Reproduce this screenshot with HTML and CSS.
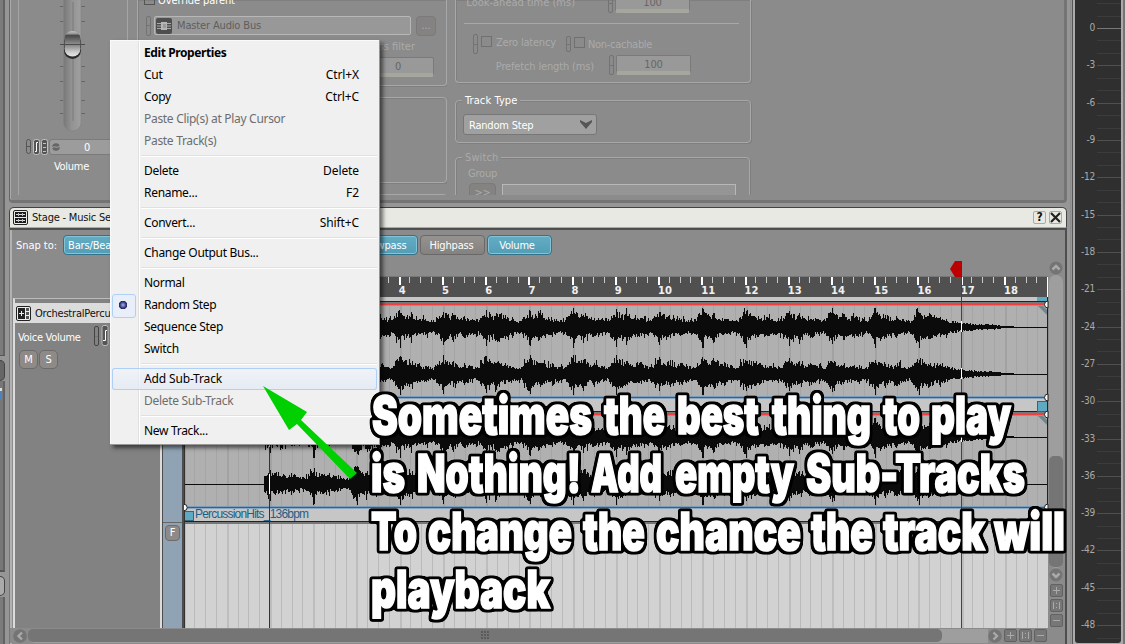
FILE: index.html
```html
<!DOCTYPE html>
<html lang="en">
<head>
<meta charset="utf-8">
<title>Stage - Music Segment</title>
<link rel="stylesheet" href="styles.css">
</head>
<body>
<div class="app">
  <aside class="edge">
    <div class="edge-panel edge-a"></div>
    <div class="edge-panel edge-b"></div>
    <div class="edge-panel edge-c"><i></i></div>
    <div class="edge-panel edge-d"></div>
    <div class="edge-panel edge-e"></div>
  </aside>

  <main class="main">
    <section class="props">
      <div class="fader-col">
        <svg class="fader" width="110" height="200" viewBox="18 0 110 200">
          <defs>
            <linearGradient id="track" x1="0" x2="1"><stop offset="0" stop-color="#777"/><stop offset=".45" stop-color="#929292"/><stop offset="1" stop-color="#a0a0a0"/></linearGradient>
            <linearGradient id="cap" x1="0" x2="0" y1="0" y2="1"><stop offset="0" stop-color="#c6c6c6"/><stop offset=".1" stop-color="#999"/><stop offset=".18" stop-color="#484848"/><stop offset=".5" stop-color="#8b8b8b"/><stop offset=".54" stop-color="#848484"/><stop offset=".85" stop-color="#d2d2d2"/><stop offset="1" stop-color="#e6e6e6"/></linearGradient>
          </defs>
          <path d="M18.5 0V195" stroke="#a5a5a5"/><path d="M127.500 0V200" stroke="#a5a5a5"/>
          <path d="M60 6.500H64M81 6.500H85M60 21.500H64M81 21.500H85M60 66.500H64M81 66.500H85M60 81.500H64M81 81.500H85M60 100.500H64M81 100.500H85M60 113.500H64M81 113.500H85" stroke="#666"/>
          <rect x="63.500" y="-10" width="17.500" height="141" rx="8.500" fill="url(#track)" stroke="#848484" stroke-width=".7"/>
          <path d="M73 2V121" stroke="#7b7b7b"/>
          <rect x="64" y="34" width="17" height="25" rx="8.500" fill="#2c2c2c"/>
          <rect x="64.500" y="31" width="16" height="25.500" rx="8" fill="url(#cap)"/>
          <path d="M64.500 40V48M80.500 40V48" stroke="#555"/>
          <path d="M60 44.500H85" stroke="#4c4c4c"/>
          <g fill="none" stroke="#555"><rect x="26.500" y="139.500" width="4" height="14" rx="2"/><path d="M27 146.500H30"/></g>
          <g fill="#555" stroke="#c2c2c2"><rect x="33.500" y="139.500" width="6" height="15" rx="2"/><path d="M38 142.500H36.500V151.500H35" stroke="#fff"/><rect x="41.500" y="139.500" width="6" height="15" rx="2"/><path d="M43 143.500H46M43 147.500H46M43 151.500H46"/></g>
          <rect x="49.500" y="139.500" width="100" height="15" rx="2.500" fill="#9c9c9c" stroke="#7b7b7b"/>
          <circle cx="56" cy="147" r="3.800" fill="#666"/><path d="M52 148C54 145 56 149 60 146" stroke="#aaa" fill="none"/>
        </svg>
        <span class="fader-value">0</span>
        <span class="fader-name">Volume</span>
      </div>

      <div class="bus-col">
        <div class="group bus-group">
          <div class="override"><i class="check"></i><span>Override parent</span></div>
          <div class="bus-row">
            <i class="link"></i>
            <div class="bus-input">
              <svg width="16" height="16" viewBox="0 0 16 16"><rect width="16" height="16" rx="2" fill="#4e4e4e"/><path d="M1 5.500H15M1 8H15M1 10.500H15" stroke="#a9a9a9"/><rect x="5" y="4" width="6" height="8" fill="#b5b5b5"/><rect x="7" y="6" width="3" height="4" fill="#999"/></svg>
              <span>Master Audio Bus</span>
            </div>
            <button class="dots">...</button>
          </div>
          <div class="filter-name">Low-pass filter</div>
          <div class="number filter-number">0</div>
        </div>
        <div class="group empty-group"></div>
        <div class="group cut-group"></div>
      </div>

      <div class="stream-col">
        <div class="group stream-group">
          <div class="field-row look"><span>Look-ahead time (ms)</span><i class="link"></i><div class="number">100</div></div>
          <div class="divider"></div>
          <div class="check-row"><i class="link"></i><i class="check"></i><span class="zero">Zero latency</span><i class="link low"></i><i class="check low"></i><span class="low">Non-cachable</span></div>
          <div class="field-row prefetch"><span>Prefetch length (ms)</span><i class="link"></i><div class="number">100</div></div>
        </div>
        <div class="group type-group">
          <span class="legend bright">Track Type</span>
          <div class="select"><span>Random Step</span><svg width="12" height="9" viewBox="0 0 12 9"><path d="M0 0L6 3L12 0V2L6 9L0 2Z" fill="#555"/></svg></div>
        </div>
        <div class="group switch-group">
          <span class="legend">Switch</span>
          <div class="group-name">Group</div>
          <div class="switch-row"><button class="arrows">&gt;&gt;</button><div class="switch-input"></div></div>
        </div>
      </div>
    </section>

    <section class="stage">
      <header class="stage-title">
        <svg width="15" height="15" viewBox="0 0 15 15"><rect x=".5" y=".5" width="14" height="14" rx="1.500" fill="#eee" stroke="#222"/><path d="M2 2H13V7H2ZM2 8H13V13H2Z" fill="#1c1c1c"/><path d="M3 4.500H12M3 10.500H12" stroke="#ddd"/><path d="M5.500 3V6M9.500 3V6M5.500 9V12M9.500 9V12" stroke="#bbb"/></svg>
        <span>Stage - Music Segment</span>
        <i class="title-btn help">?</i>
        <i class="title-btn"><svg width="11" height="11" viewBox="0 0 11 11"><path d="M1 1L10 10M10 1L1 10" stroke="#222" stroke-width="2.200"/></svg></i>
      </header>
      <div class="stage-frame">
        <div class="toolbar">
          <span class="snap">Snap to:</span>
          <button class="toggle on bars">Bars/Beats</button>
          <button class="toggle on lowpass">Lowpass</button>
          <button class="toggle">Highpass</button>
          <button class="toggle on vol">Volume</button>
        </div>
        <div class="stage-body">
          <div class="track-col">
            <div class="track-panel">
              <div class="track-title">
                <svg width="15" height="15" viewBox="0 0 15 15"><rect x=".5" y=".5" width="14" height="14" rx="1.500" fill="#eee" stroke="#222"/><rect x="2" y="2" width="7" height="11" fill="#222"/><path d="M3 7.500H8M5.500 5V10" stroke="#eee"/><path d="M10 2H13V5H10ZM10 6H13V9H10ZM10 10H13V13H10Z" fill="#555"/></svg>
                <span>OrchestralPercussion</span>
              </div>
              <div class="voice"><span>Voice Volume</span><i class="link dark"></i><svg width="8" height="21" viewBox="0 0 8 21"><rect x="1" y=".5" width="6" height="20" rx="2" fill="#555" stroke="#bbb"/><path d="M6 5.500H4.500V15.500H2" stroke="#fff" fill="none"/></svg></div>
              <div class="ms"><button>M</button><button>S</button></div>
            </div>
          </div>
          <div class="strip"><div class="strip-cell"><button>F</button></div></div>
          <svg id="timeline" class="timeline" width="865" height="368" viewBox="184 260 865 368"></svg>
          <div class="vscroll">
            <svg width="14" height="14" viewBox="0 0 14 14"><circle cx="7" cy="7" r="6.500" fill="#747474"/><path d="M3.500 8.500L7 5L10.500 8.500" stroke="#aaa" stroke-width="2.500" fill="none"/></svg>
            <div class="vtrack"><div class="vthumb"></div></div>
            <svg width="14" height="14" viewBox="0 0 14 14"><circle cx="7" cy="7" r="6.500" fill="#747474"/><path d="M3.500 5.500L7 9L10.500 5.500" stroke="#aaa" stroke-width="2.500" fill="none"/></svg>
            <i class="zoom plus"></i><i class="zoom fit"></i><i class="zoom minus"></i>
          </div>
        </div>
        <div class="hscroll">
          <svg width="15" height="14" viewBox="0 0 15 14"><circle cx="7" cy="7" r="6.800" fill="#747474"/><path d="M9 3.500L5.500 7L9 10.500" stroke="#aaa" stroke-width="2.300" fill="none"/></svg>
          <div class="htrack"><div class="hthumb"><i></i></div></div>
          <svg width="14" height="14" viewBox="0 0 14 14"><circle cx="7" cy="7" r="6.800" fill="#747474"/><path d="M5.500 3.500L9 7L5.500 10.500" stroke="#aaa" stroke-width="2.300" fill="none"/></svg>
          <i class="zoom plus"></i><i class="zoom fit"></i><i class="zoom minus"></i>
        </div>
      </div>
    </section>
  </main>

  <aside class="meter"><svg id="meter" width="46" height="643" viewBox="1075 0 46 643"></svg></aside>
</div>

<nav class="menu">
  <div class="item strong"><span>Edit Properties</span></div>
  <div class="item"><span>Cut</span><kbd>Ctrl+X</kbd></div>
  <div class="item"><span>Copy</span><kbd>Ctrl+C</kbd></div>
  <div class="item off"><span>Paste Clip(s) at Play Cursor</span></div>
  <div class="item off"><span>Paste Track(s)</span></div>
  <hr>
  <div class="item"><span>Delete</span><kbd>Delete</kbd></div>
  <div class="item"><span>Rename...</span><kbd>F2</kbd></div>
  <hr>
  <div class="item"><span>Convert...</span><kbd>Shift+C</kbd></div>
  <hr>
  <div class="item"><span>Change Output Bus...</span></div>
  <hr>
  <div class="item"><span>Normal</span></div>
  <div class="item radio"><span>Random Step</span></div>
  <div class="item"><span>Sequence Step</span></div>
  <div class="item"><span>Switch</span></div>
  <hr>
  <div class="item hover"><span>Add Sub-Track</span></div>
  <div class="item off"><span>Delete Sub-Track</span></div>
  <hr>
  <div class="item"><span>New Track...</span></div>
</nav>

<svg class="callout" width="1125" height="644" viewBox="0 0 1125 644">
  <defs>
    <filter id="outline" filterUnits="userSpaceOnUse" x="350" y="380" width="740" height="250" color-interpolation-filters="sRGB">
      <feMorphology in="SourceGraphic" operator="dilate" radius="2" result="fat"/>
      <feColorMatrix in="fat" values="0 0 0 0 0  0 0 0 0 0  0 0 0 0 0  0 0 0 1 0" result="black"/>
      <feGaussianBlur in="black" stdDeviation="1.100" result="soft"/>
      <feComponentTransfer in="soft" result="edge"><feFuncA type="linear" slope="5" intercept="-.8"/></feComponentTransfer>
      <feMerge><feMergeNode in="edge"/><feMergeNode in="SourceGraphic"/></feMerge>
    </filter>
  </defs>
  <path d="M263 386L307 412L301 420L357 473L350 479L297 424L289 430Z" fill="#00cf00"/>
  <g id="caption" class="caption" filter="url(#outline)"></g>
</svg>
<script src="script.js"></script>
</body>
</html>
```
FILE: styles.css
```css
* { box-sizing: border-box; }
body { margin: 0; width: 1125px; height: 644px; overflow: hidden; position: relative; background: #969696; font: 11px/14px "DejaVu Sans Condensed", "DejaVu Sans", sans-serif; font-stretch: condensed; color: #fff; letter-spacing: -0.2px; }
button { font: inherit; color: inherit; letter-spacing: inherit; padding: 0; margin: 0; }
i { font-style: normal; display: block; flex: none; }
svg { display: block; flex: none; }
span { white-space: nowrap; }
.app { display: flex; height: 644px; }

.edge { width: 9px; flex: none; display: flex; flex-direction: column; background: #969696; }
.edge-panel { width: 5px; border-right: 2px solid #626262; background: #7b7b7b; margin-bottom: 5px; flex: none; }
.edge-a { height: 356px; border-bottom: 1px solid #555; margin-bottom: 4px; }
.edge-b { height: 21px; background: #666; border: 1px solid #444; border-left: 0; border-radius: 0 5px 5px 0; margin-bottom: 0; }
.edge-c { height: 191px; background: #777; border-bottom: 2px solid #555; }
.edge-c i { width: 2px; height: 12px; margin-top: 7px; background: #4d82c4; border-top: 3px solid #ddd; }
.edge-d { height: 20px; background: #aaa; border: 1px solid #444; border-left: 0; border-radius: 0 5px 5px 0; margin: -1px 0 1px; }
.edge-e { height: 60px; }

.main { width: 1062px; flex: none; border-right: 1px solid #8c8c8c; background: #969696; }
.props { width: 1058px; height: 203px; border: solid #747474; border-width: 0 3px 3px 1px; border-left-color: #666; border-radius: 0 0 4px 4px; background: #8b8b8b; box-shadow: inset 1px 0 #a9a9a9; display: flex; overflow: hidden; }
.props > div { height: 195px; overflow: hidden; }
.fader-col { width: 118px; margin-left: 8px; flex: none; display: grid; grid-template: 1fr / 1fr; }
.fader, .fader-value, .fader-name { grid-area: 1 / 1; }
.fader-value { margin: 141px 0 0 66px; }
.fader-name { margin: 160px 0 0 36px; letter-spacing: -.3px; }
.group { border: 1px solid #a8a8a8; border-radius: 4px; box-shadow: inset 1px 1px #7f7f7f, 1px 1px #7f7f7f; color: #aaa; }

.bus-col { width: 310px; flex: none; margin-left: 1px; }
.bus-group { height: 86px; border-top: 0; border-radius: 0 0 4px 4px; }
.override { display: flex; gap: 3px; height: 15px; color: #fff; }
.override span { margin-top: -6px; letter-spacing: -.1px; }
.check { width: 11px; height: 11px; border: 1px solid #707070; }
.override .check { margin: -6px 0 0 6px; border-color: #555; }
.bus-row { display: flex; height: 21px; align-items: center; }
.link { width: 5px; height: 20px; border: 1px solid #737373; border-radius: 2px; background: linear-gradient(#737373, #737373) center / 100% 1px no-repeat; }
.bus-row .link { margin: 0 3px 0 8px; }
.bus-input { width: 257px; height: 19px; border: 1px solid #b7b7b7; background: #989898; color: #5e5e5e; display: flex; align-items: center; gap: 5px; padding-left: 1px; border-radius: 2px; letter-spacing: -.15px; }
.dots { width: 20px; height: 20px; margin-left: 5px; border: 1px solid #7a7a7a; border-radius: 4px; background: #858381; color: #aaa; line-height: 14px; }
.filter-name { width: 277px; text-align: right; margin-top: 4px; letter-spacing: 0; }
.number { width: 76px; height: 20px; border: 1px solid #7a7a7a; border-bottom: 4px solid #a5a69c; border-radius: 2px; background: #999; color: #666; text-align: center; line-height: 17px; }
.filter-number { margin: 3px 0 0 219px; width: 77px; padding-left: 5px; }
.empty-group { height: 86px; margin-top: 11px; }
.cut-group { margin-top: 11px; height: 20px; border-width: 1px 0 0; }

.stream-col { width: 297px; margin-left: 8px; flex: none; }
.stream-group { height: 83px; width: 296px; border-top: 0; border-radius: 0 0 4px 4px; }
.field-row { display: flex; }
.field-row span { text-align: right; width: 138px; letter-spacing: -.15px; }
.field-row .number { margin-left: 2px; width: 75px; }
.look { height: 23px; margin-top: 0; }
.field-row.look span { margin: -4px 14px 0 0; width: 119px; letter-spacing: 0; }
.look > i, .look > .number { margin-top: -7px; }
.look .link { margin-left: 19px; }
.divider { height: 1px; margin: 0 11px 0 8px; background: #a8a8a8; }
.check-row { display: flex; height: 28px; padding-top: 10px; letter-spacing: -.2px; }
.check-row .link { margin-left: 17px; margin-right: 3px; }
.check-row .check { margin: 2px 4px 0 0; }
.check-row .zero { width: 61px; }
.check-row .link.low { height: 16px; margin: 2px 3px 0 9px; }
.check-row .check.low { margin: 3px 3px 0 0; }
.check-row span { margin-top: 2px; }
.check-row span.low { margin-top: 4px; letter-spacing: -.3px; }
.prefetch { margin-top: 3px; }
.prefetch span { margin: 5px 15px 0 0; }
.type-group { height: 43px; width: 296px; margin-top: 17px; }
.legend { display: block; width: max-content; margin: -7px 0 0 6px; padding: 0 3px; background: #8b8b8b; position: relative; letter-spacing: .1px; }
.bright { color: #fff; }
.select { width: 134px; height: 21px; margin: 6px 0 0 7px; display: flex; justify-content: space-between; align-items: center; padding: 2px 4px 0 5px; border: 1px solid #777; border-radius: 3px; background: #a0a0a0; color: #fff; letter-spacing: -.2px; }
.select svg { margin-top: -2px; }
.switch-group { height: 70px; width: 295px; margin-top: 14px; }
.group-name { margin: 2px 0 0 12px; letter-spacing: -.2px; }
.switch-row { display: flex; margin: 2px 0 0 13px; }
.arrows { width: 27px; height: 20px; border: 1px solid #7a7a7a; border-radius: 4px; background: #858381; color: #aaa; }
.switch-input { width: 234px; height: 20px; margin: 1px 0 0 6px; border: 1px solid #b7b7b7; background: #959595; }

.stage { margin-top: 4px; width: 1058px; }
.stage-title { height: 21px; border: 1px solid #444; border-bottom-color: #aaa; border-radius: 5px 5px 0 0; background: #e8e9e2; color: #111; display: flex; align-items: center; padding: 0 4px 0 3px; gap: 3px; letter-spacing: -.2px; }
.stage-title span { flex: 1; margin-left: 1px; }
.title-btn { width: 13px; height: 13px; border: 1px solid #aaa; border-radius: 2px; display: grid; place-items: center; }
.help { font-weight: bold; font-size: 12px; line-height: 11px; }
.stage-frame { border: solid #4e4e4e; border-width: 2px 2px 0 1px; border-left-color: #777; background: #8b8b8b; box-shadow: inset 2px 0 #b2b2b2; height: 418px; display: flex; flex-direction: column; }
.toolbar { display: flex; height: 30px; flex: none; align-items: center; padding: 0 0 0 6px; }
.snap { width: 47px; letter-spacing: -.05px; padding-top: 1px; }
.toggle { width: 65px; height: 20px; margin-right: 2px; border: 1px solid #696969; border-radius: 4px; background: linear-gradient(#96928f, #84817f); padding: 1px 2px 0 0; letter-spacing: -.15px; }
.toggle.on { background: linear-gradient(#62acc4, #539db6); border-color: #327389; box-shadow: inset 0 0 0 1px #85c4d8; }
.toggle.bars { padding-right: 3px; }
.toggle.vol { padding-right: 5px; letter-spacing: -.2px; }
.toggle.lowpass { margin-left: 223px; padding: 1px 0 0 1px; }
.stage-body { display: flex; height: 368px; flex: none; }
.track-col { width: 152px; flex: none; padding: 38px 0 0 3px; }
.track-panel { height: 330px; border: solid #dcdcdc; border-width: 0 2px; border-top: 1px solid #bbb; background: #828282; padding-top: 4px; }
.track-title { height: 20px; background: #dcdcdc; color: #111; display: flex; align-items: center; gap: 4px; padding: 1px 0 0 1px; }
.voice { display: flex; height: 27px; padding: 2px 0 0 3px; }
.voice span { width: 76px; margin-top: 6px; letter-spacing: -.3px; }
.voice .link { margin: 1px 2px 0 0; }
.link.dark { border-color: #444; }
.ms { display: flex; gap: 1px; padding-left: 4px; }
.ms button, .strip button { width: 19px; height: 19px; border: 1px solid #6d6b69; border-radius: 5px; background: #8e8a88; }
.strip { width: 23px; flex: none; padding-top: 262px; background: #90a3b4; border: solid #4d4d4d; border-width: 0 3px 0 1px; }
.strip-cell { border-top: 1px solid #666; padding: 2px 0 0 2px; }
.strip button { width: 15px; height: 16px; border-radius: 4px; display: block; }
.timeline { margin-left: -1px; }
.vscroll { width: 14px; padding: 1px 0 0; display: flex; flex-direction: column; align-items: center; }
.vtrack { width: 14px; height: 293px; background: #9e9e9e; padding-top: 181px; border-radius: 7px; }
.vthumb { height: 111px; border-radius: 5px; background: #757575; }
.zoom { width: 13px; height: 13px; margin: 2px 0 0; border: 1px solid #626262; border-radius: 2px; background: #858585; }
.zoom.plus { background: linear-gradient(#aaa, #aaa) center / 7px 1px no-repeat, linear-gradient(#aaa, #aaa) center / 1px 7px no-repeat, #777; }
.zoom.minus { background: linear-gradient(#aaa, #aaa) center / 7px 1px no-repeat, #777; }
.zoom.fit { background: linear-gradient(#aaa, #aaa) 2px center / 1px 7px no-repeat, linear-gradient(#aaa, #aaa) 8px center / 1px 7px no-repeat, linear-gradient(#aaa, #aaa) 5px 3px / 1px 1px no-repeat, linear-gradient(#aaa, #aaa) 5px 7px / 1px 1px no-repeat, #777; }
.hscroll { display: flex; height: 15px; padding: 0 16px 0 3px; align-items: center; background: #8b8b8b; }
.htrack { width: 960px; height: 14px; background: #9e9e9e; border-radius: 7px 0 0 7px; }
.hthumb { width: 914px; height: 13px; border-radius: 5px; background: #757575; padding: 2px 0 0 453px; }
.hthumb i { width: 9px; height: 9px; background: radial-gradient(circle at 1px 1px, #5a5a5a .7px, transparent .9px) 0 0 / 3px 3px; }
.hscroll .zoom { margin: 0 0 0 2px; }

.meter { width: 54px; flex: none; padding-left: 1px; border-left: 1px solid #555; border-right: 3px solid #747474; background: #aaa; margin-left: 1px; }
.meter svg { margin-left: 1px; background: #2f2f2f; border-radius: 0 0 3px 3px; }
.meter text { font: 10px "DejaVu Sans Condensed", "DejaVu Sans", sans-serif; font-stretch: condensed; fill: #aaa; text-anchor: end; }
.bar-number { font: bold 10px "DejaVu Sans", sans-serif; font-stretch: normal; fill: #f0f0f0; letter-spacing: .1px; }

.menu { position: absolute; left: 110px; top: 40px; width: 270px; height: 405px; padding: 2px 2px 2px; border: solid #979797; border-width: 0 1px 1px 0; background: linear-gradient(90deg, transparent 28px, #e0e0e0 28px 29px, #fff 29px 30px, transparent 30px), #f0f0f0; box-shadow: inset 1px 1px #fafafa, 3px 3px 4px rgba(0,0,0,.55); color: #000; font: 12px/22px "Noto Sans", "Open Sans", sans-serif; font-stretch: normal; letter-spacing: -.3px; }
.item { display: flex; justify-content: space-between; height: 22px; padding: 0 18px 0 32px; position: relative; line-height: 21px; }
.item kbd { font: inherit; letter-spacing: -.1px; }
.strong { font-weight: bold; letter-spacing: -.4px; }
.off { color: #6d6d6d; }
.menu hr { height: 2px; border: 0; margin: 3px 0 3px 29px; background: linear-gradient(#e0e0e0 50%, #fff 50%); }
.hover { box-shadow: inset 0 0 0 1px #aecff7; border-radius: 3px; background: linear-gradient(rgba(240,244,250,.6), rgba(225,233,246,.7)); letter-spacing: -.15px; }
.radio::before { content: ""; position: absolute; left: 0; top: 0; width: 22px; height: 22px; border: 1px solid #aecff7; border-radius: 3px; background: radial-gradient(circle at 10px 10px, #aab4e8 0, #363a80 3px, #222558 4px, transparent 4.500px), #e8eff8; }

.callout { position: absolute; left: 0; top: 0; }
.caption text { font: 900 52px Inter, "Liberation Sans", sans-serif; fill: #fff; stroke: #fff; stroke-width: 1.600px; letter-spacing: 0; }
```
FILE: script.js
```js
const NS = 'http://www.w3.org/2000/svg';
function add(parent, name, attrs, text) {
  const el = document.createElementNS(NS, name);
  for (const key in attrs) el.setAttribute(key, attrs[key]);
  if (text !== undefined) el.textContent = text;
  parent.appendChild(el);
  return el;
}

const tl = document.getElementById('timeline');
const box = (x, y, w, h, fill) => add(tl, 'rect', { x, y, width: w, height: h, fill });
const START = 184, END = 1047.500, BAR = 43.230;
const barX = n => 270 + (n - 1) * BAR;

box(START, 277, 864, 20, '#505050');
box(START, 276, 864, 1, '#777');
box(START, 297, 864, 227, '#c6c6c6');
box(START, 306, 864, 90, '#b0b0b0');
box(START, 415, 864, 91, '#b0b0b0');
box(START, 524, 864, 104, '#d2d2d2');

// Beat grid and ruler ticks
for (let i = -8; i <= 72; i++) {
  const x = Math.round(270 + i * BAR / 4), major = i % 4 === 0;
  if (x > END) break;
  const w = major ? 2 : 1;
  box(x, 306, w, 90, major ? '#a2a2a2' : '#a5a5a5');
  box(x, 415, w, 91, major ? '#a2a2a2' : '#a5a5a5');
  box(x, 524, w, 104, major ? '#bdbdbd' : '#bababa');
  box(x - 1, 277, w, major ? 8 : 6, major ? '#fff' : '#c9c9c9');
}
for (let n = 1; n <= 18; n++) {
  add(tl, 'text', { x: barX(n) - 1, y: 294, class: 'bar-number' }, n);
}

// A seeded generator keeps both sub-tracks identical
function noise(seed) {
  let s = seed;
  return () => { s = (s * 16807) % 2147483647; return s / 2147483647; };
}
function wave(cy, seed) {
  const rnd = noise(seed);
  const bars = Array.from({ length: 18 }, () => [8 + 3 * rnd(), 1 + 5 * rnd(), 5 * rnd(), 8 + 4 * rnd()]);
  const hit = (f, at, rise, fall) => f < at ? Math.exp(-Math.pow((f - at) / rise, 2)) : Math.exp(-(f - at) / fall);
  let d = '';
  for (let x = 264; x < 1014; x++) {
    const pos = (x - 262) / BAR, f = pos - Math.floor(pos), b = bars[Math.min(17, Math.floor(pos))];
    let e = 5.500 + b[0] * hit(f, .18, .13, .26) + b[1] * hit(f, .43, .05, .12) + b[2] * hit(f, .68, .05, .14);
    if (x < 350) e *= .85;
    if (x > 948) e = 5 * Math.exp(-(x - 948) / 28) + 1.300;
    if (x > 1000) e = 1;
    const spike = x < 948 && rnd() > .82 ? 4 : 0;
    const hitLine = Math.abs(f - .19) < .013 && x < 948 ? b[3] : 0;
    const up = e * (.68 + .5 * rnd()) + spike * rnd() + hitLine * .3;
    const down = e * (.65 + .5 * rnd()) + spike * rnd() + hitLine * .8;
    d += `M${x + .500} ${Math.round(cy - Math.min(up, 19))}V${Math.round(cy + Math.min(down, 21))}`;
  }
  add(tl, 'path', { d, stroke: '#0b0b0b', 'stroke-width': 1 });
  box(START, cy, 864, 1, '#0b0b0b');
}
wave(327, 4211); wave(374, 917); wave(437, 4211); wave(484, 917);

for (const y of [301, 411]) {
  box(START, y, 864, 1, '#222');
  box(START, y + 1, 864, 1, '#777');
  box(START, y + 2, 864, 2, '#f33f3f');
  box(START, y + 4, 864, 1, '#b98585');
}
for (const y of [396, 506]) {
  box(START, y, 864, 1, '#7b9cba');
  box(START, y + 1, 864, 1, '#2563a4');
  box(START, y + 2, 864, 1, '#8aa6bf');
}
box(START, 521, 864, 1, '#222');
box(START, 522, 864, 2, '#777');

// Clip handles
box(1037, 297, 10, 4, '#60a9c2');
add(tl, 'rect', { x: 1037.500, y: 401.500, width: 10, height: 10, fill: '#60a9c2', stroke: '#356779' });
add(tl, 'rect', { x: 184.500, y: 511.500, width: 9, height: 9, fill: '#60a9c2', stroke: '#356779' });
for (const y of [306, 416]) add(tl, 'path', { d: `M1038 ${y}L1048 ${y + 10}V${y + 5}L1043 ${y}Z`, fill: '#71858d' });
box(START, 297, 1, 331, '#333');
box(1047, 277, 1, 20, '#fff');
box(1047, 297, 1, 225, '#222');
for (const y of [304.500, 397.500, 414.500, 507.500]) add(tl, 'path', { d: `M1048 ${y - 3.500}A3.500 3.500 0 0 0 1048 ${y + 3.500}Z`, fill: '#fff', stroke: '#222' });
add(tl, 'circle', { cx: 184, cy: 507.500, r: 3.200, fill: '#fff', stroke: '#222' });
add(tl, 'text', { x: 195, y: 518, fill: '#1d5f86', 'font-family': 'Liberation Sans', 'font-size': 12, textLength: 114, 'letter-spacing': 0 }, 'PercussionHits_136bpm');

// Entry and exit cues
box(269, 277, 1, 351, '#333');
box(961, 277, 1, 351, '#444');
for (const x of [269, 961]) for (const y of [327, 374, 437, 484]) box(x, y - (x > 900 ? 6 : 10), 1, x > 900 ? 11 : 20, '#fff');
add(tl, 'path', { d: 'M955 261H962V277H955L950 269Z', fill: '#bc0000' });

const meter = document.getElementById('meter');
for (let i = -2; i < 50; i++) {
  const y = Math.round(28 + i * 12.440), major = i % 3 === 0;
  if (y > 640) break;
  add(meter, 'rect', { x: 1097, y, width: 24, height: 1, fill: i === 0 ? '#777' : major ? '#505050' : '#3c3c3c' });
  if (major) add(meter, 'text', { x: 1095, y: y + 2.500 }, i === 0 ? '0' : String(-i));
}

// Words: left edge, baseline, width
const words = [
  ['Sometimes', 372, 434, 220], ['the', 604, 434, 61], ['best', 677, 434, 82], ['thing', 772, 434, 99], ['to', 883, 434, 37], ['play', 931, 434, 80],
  ['is', 371, 492, 34], ['Nothing!', 417, 492, 164], ['Add', 591, 492, 71], ['empty', 675, 492, 119], ['Sub-Tracks', 806, 492, 219],
  ['To', 371, 549.500, 46], ['change', 428, 549.500, 144], ['the', 583, 549.500, 62], ['chance', 656, 549.500, 145], ['the', 811, 549.500, 62], ['track', 883, 549.500, 102], ['will', 994, 549.500, 71],
  ['playback', 371, 607.500, 179]
];
const caption = document.getElementById('caption');
for (const [word, x, y, w] of words) add(caption, 'text', { x, y, textLength: w, lengthAdjust: 'spacingAndGlyphs' }, word);
```
